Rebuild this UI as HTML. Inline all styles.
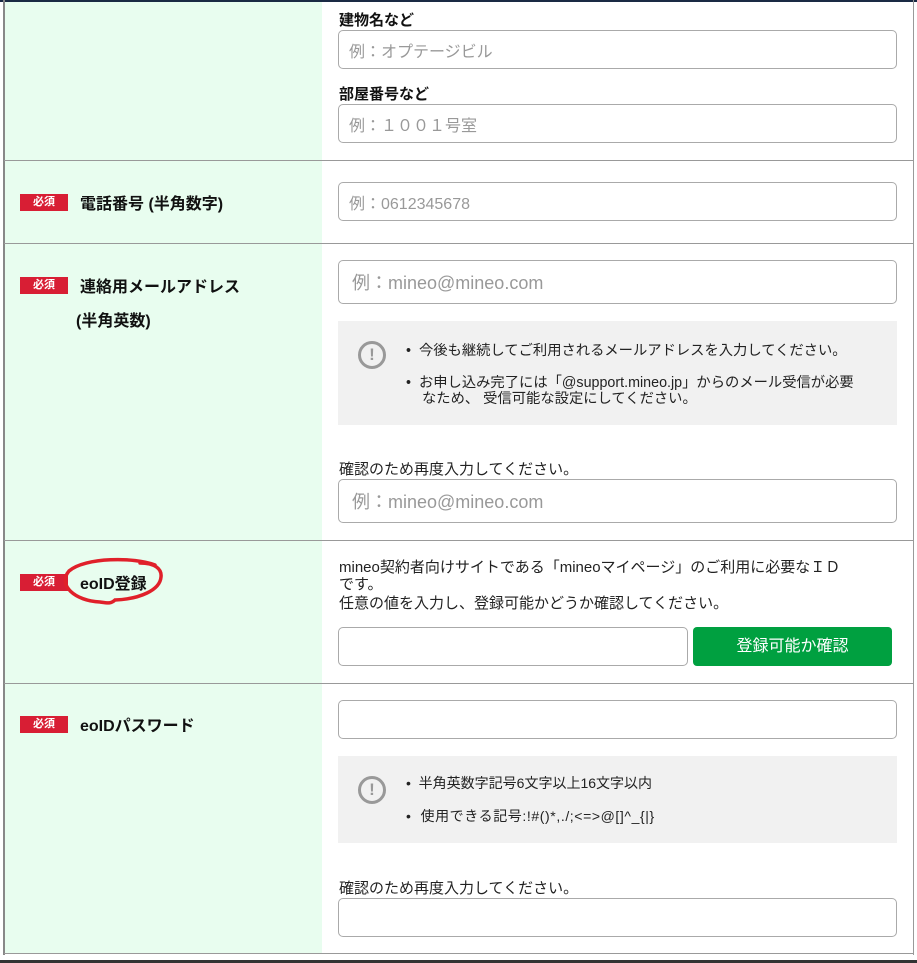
<!DOCTYPE html>
<html><head><meta charset="utf-8"><style>
*{margin:0;padding:0;box-sizing:border-box}
body{width:917px;height:963px;position:relative;overflow:hidden;background:#fff;font-family:"Liberation Sans","Noto Sans CJK JP",sans-serif;color:#222}
.a{position:absolute}
.top{left:0;top:0;width:917px;height:2px;background:#1a2a44}
.lb{left:3px;top:0;width:2px;height:955px;background:#888}
.rb{left:913px;top:0;width:1px;height:955px;background:#999}
.green{left:5px;top:2px;width:317px;height:951px;background:#e8fdef}
.sep{left:4px;width:910px;height:1px;background:#999}
.in{left:338px;width:559px;border:1px solid #aaa;border-radius:5px;background:#fff;color:#999;font-size:16px;padding-left:10px;display:flex;align-items:center}
.lab{font-size:15px;font-weight:bold;color:#111}
.lab16{font-size:16px;font-weight:bold;color:#111}
.badge{left:20px;width:48px;height:17px;background:#d81e34;color:#fff;font-size:11px;font-weight:bold;text-align:center;line-height:17px}
.box{left:338px;width:559px;background:#f1f1f1}
.ic{width:28px;height:28px;border:3px solid #999;border-radius:50%;color:#999;font-weight:bold;font-size:17px;text-align:center;line-height:22px}
.t{font-size:14.3px;color:#222;white-space:nowrap}
.t15{font-size:15px;color:#222;white-space:nowrap}
</style></head><body>
<div class="a green"></div>
<div class="a top"></div>
<div class="a lb"></div>
<div class="a rb"></div>
<div class="a sep" style="top:160px"></div>
<div class="a sep" style="top:243px"></div>
<div class="a sep" style="top:540px"></div>
<div class="a sep" style="top:683px"></div>
<div class="a sep" style="top:953px"></div>
<div class="a" style="left:0;top:960px;width:917px;height:3px;background:#333"></div>

<div class="a lab" style="left:339px;top:9px">建物名など</div>
<div class="a in" style="top:30px;height:39px">例：オプテージビル</div>
<div class="a lab" style="left:339px;top:83px">部屋番号など</div>
<div class="a in" style="top:104px;height:39px">例：１００１号室</div>

<div class="a badge" style="top:194px">必須</div>
<div class="a lab16" style="left:80px;top:190px">電話番号 (半角数字)</div>
<div class="a in" style="top:182px;height:39px">例：0612345678</div>

<div class="a badge" style="top:277px">必須</div>
<div class="a lab16" style="left:80px;top:273px">連絡用メールアドレス</div>
<div class="a lab16" style="left:76px;top:307px">(半角英数)</div>
<div class="a in" style="top:260px;height:44px;font-size:18px;padding-left:13px">例：mineo@mineo.com</div>
<div class="a box" style="top:321px;height:104px"></div>
<div class="a ic" style="left:358px;top:341px">!</div>
<div class="a t" style="left:406px;top:339px">•&nbsp; 今後も継続してご利用されるメールアドレスを入力してください。</div>
<div class="a t" style="left:406px;top:371px">•&nbsp; お申し込み完了には「@support.mineo.jp」からのメール受信が必要</div>
<div class="a t" style="left:422px;top:387px">なため、 受信可能な設定にしてください。</div>
<div class="a t15" style="left:339px;top:458px">確認のため再度入力してください。</div>
<div class="a in" style="top:479px;height:44px;font-size:18px;padding-left:13px">例：mineo@mineo.com</div>

<div class="a badge" style="top:574px">必須</div>
<div class="a lab16" style="left:80px;top:570px">eoID登録</div>
<svg class="a" style="left:55px;top:555px" width="115" height="55"><path d="M100 10 C80 2 30 2 14 16 C2 30 20 46 45 47 C52 48 56 49 60 45 C85 44 105 35 106 22 C107 14 100 8 85 8" fill="none" stroke="#e0202a" stroke-width="3.5" stroke-linecap="round"/></svg>
<div class="a t15" style="left:339px;top:556px">mineo契約者向けサイトである「mineoマイページ」のご利用に必要なＩＤ</div>
<div class="a t15" style="left:339px;top:573px">です。</div>
<div class="a t15" style="left:339px;top:592px">任意の値を入力し、登録可能かどうか確認してください。</div>
<div class="a in" style="top:627px;height:39px;width:350px"></div>
<div class="a" style="left:693px;top:627px;width:199px;height:39px;background:#00a040;border-radius:4px;color:#fff;font-size:16px;text-align:center;line-height:39px">登録可能か確認</div>

<div class="a badge" style="top:716px">必須</div>
<div class="a lab16" style="left:80px;top:712px">eoIDパスワード</div>
<div class="a in" style="top:700px;height:39px"></div>
<div class="a box" style="top:756px;height:87px"></div>
<div class="a ic" style="left:358px;top:776px">!</div>
<div class="a t" style="left:406px;top:773px;font-size:14px">•&nbsp; 半角英数字記号6文字以上16文字以内</div>
<div class="a t" style="left:406px;top:806px;font-size:14px;letter-spacing:0.6px">•&nbsp; 使用できる記号:!#()*,./;&lt;=&gt;@[]^_{|}</div>
<div class="a t15" style="left:339px;top:877px">確認のため再度入力してください。</div>
<div class="a in" style="top:898px;height:39px"></div>
</body></html>
